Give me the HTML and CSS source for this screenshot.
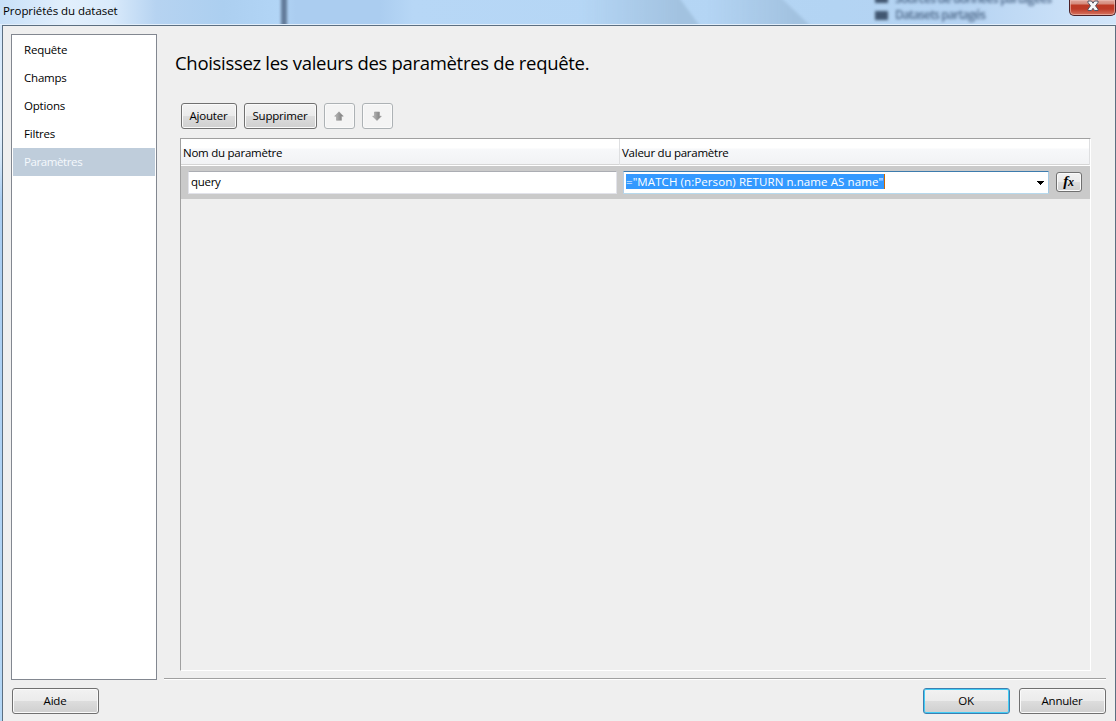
FILE: index.html
```html
<!DOCTYPE html>
<html lang="fr">
<head>
<meta charset="utf-8">
<title>Propriétés du dataset</title>
<link rel="stylesheet" href="styles.css">
</head>
<body>
<div class="window">
  <header class="titlebar">
    <svg class="glass" width="1116" height="24" viewBox="0 0 1116 24" aria-hidden="true">
      <defs>
        <linearGradient id="sky"><stop offset="0" stop-color="#c8e0f8"/><stop offset=".06" stop-color="#e2effc"/><stop offset=".1" stop-color="#d9eafb"/><stop offset=".14" stop-color="#b6d3f1"/><stop offset=".2" stop-color="#accff0"/><stop offset=".25" stop-color="#b2d5f6"/><stop offset=".265" stop-color="#abcdf0"/><stop offset=".34" stop-color="#abcdf0"/><stop offset=".37" stop-color="#b7d7f6"/><stop offset=".54" stop-color="#b5d6f5"/><stop offset=".75" stop-color="#b3d4f3"/><stop offset=".86" stop-color="#b5d3f2"/><stop offset="1" stop-color="#d3e6fa"/></linearGradient>
        <linearGradient id="fold"><stop offset="0" stop-color="#a2c2e0" stop-opacity="0"/><stop offset=".8" stop-color="#a2c2e0"/></linearGradient>
        <filter id="soft" x="-20%" y="-50%" width="140%" height="200%"><feGaussianBlur stdDeviation="1.8"/></filter>
      </defs>
      <rect width="1116" height="24" fill="url(#sky)"/>
      <path d="M580-8H675L705 33H580Z" fill="url(#fold)" filter="url(#soft)"/>
      <path d="M705-8H775L818 33H705Z" fill="url(#fold)" filter="url(#soft)"/>
      <g filter="url(#soft)">
        <path d="M281-5H287V30H281Z" fill="#627a99"/>
        <path d="M875-3H888V3H875ZM875 11H888V20H875Z" fill="#405670"/>
        <g class="behind">
          <text x="895" y="3" textLength="157">Sources de données partagées</text>
          <text x="895" y="19" textLength="91">Datasets partagés</text>
        </g>
      </g>
    </svg>
    <h1 class="caption">Propriétés du dataset</h1>
    <button class="close" aria-label="Fermer">
      <svg width="12" height="12" viewBox="0 0 12 12"><path d="M1 1H4.5L6 3.2 7.5 1H11V2.5L8.5 5.8 11 9.2V10.5H7.5L6 8.3 4.5 10.5H1V9.2L3.5 5.8 1 2.5Z" fill="#f7f7f8" stroke="#535666"/></svg>
    </button>
  </header>
  <div class="client">
    <div class="content">
      <nav class="nav">
        <a class="nav-item">Requête</a>
        <a class="nav-item">Champs</a>
        <a class="nav-item">Options</a>
        <a class="nav-item">Filtres</a>
        <a class="nav-item selected">Paramètres</a>
      </nav>
      <main class="page">
        <h2 class="heading">Choisissez les valeurs des paramètres de requête.</h2>
        <div class="toolbar">
          <button class="btn add">Ajouter</button>
          <button class="btn remove">Supprimer</button>
          <button class="btn arrow" disabled aria-label="Monter">
            <svg width="10" height="10" viewBox="0 0 10 10"><defs><linearGradient id="gray"><stop stop-color="#bbb"/><stop offset="1" stop-color="#777"/></linearGradient></defs><path d="M5 .8 9.3 5.2H7.5V9.3H2.5V5.2H.7Z" fill="url(#gray)" stroke="#999" stroke-width=".6"/></svg>
          </button>
          <button class="btn arrow" disabled aria-label="Descendre">
            <svg width="10" height="10" viewBox="0 0 10 10"><path d="M5 9.5 9.3 5.2H7.5V1H2.5V5.2H.7Z" fill="url(#gray)" stroke="#999" stroke-width=".6"/></svg>
          </button>
        </div>
        <section class="grid">
          <div class="grid-head">
            <div class="col name-col">Nom du paramètre</div>
            <div class="col value-col">Valeur du paramètre</div>
          </div>
          <div class="grid-row">
            <div class="field">query</div>
            <div class="combo">
              <span class="selection">="MATCH (n:Person) RETURN n.name AS name"</span>
              <svg class="drop" width="8" height="4" viewBox="0 0 8 4" shape-rendering="crispEdges"><path d="M0 0H8L4 4Z"/></svg>
            </div>
            <button class="btn fx" aria-label="Expression"><span class="f">f</span><span class="x">x</span></button>
          </div>
        </section>
      </main>
    </div>
    <footer class="footer">
      <button class="btn dialog-btn help">Aide</button>
      <button class="btn dialog-btn ok">OK</button>
      <button class="btn dialog-btn">Annuler</button>
    </footer>
  </div>
</div>
</body>
</html>
```
FILE: styles.css
```css
* { box-sizing: border-box; }
body { margin: 0; overflow: hidden; font: 11.5px/16px "Open Sans", "Noto Sans", sans-serif; letter-spacing: -0.2px; color: #000; }
h1, h2 { margin: 0; font-weight: 400; }
button { font: inherit; letter-spacing: inherit; color: inherit; }

.window { width: 1116px; height: 721px; display: flex; flex-direction: column; background: linear-gradient(#cfe5fb 0, #e3f0fc 130px, #d2e5f7 160px, #a9cdf2 200px, #b4d7f6 100%); }
.titlebar { position: relative; display: flex; justify-content: space-between; height: 25px; border-bottom: 1px solid #e3effb; }
.glass { position: absolute; top: 0; left: 0; }
.behind { font-size: 12px; font-weight: 600; fill: #4f6a8b; }
.caption { position: relative; padding: 3px 0 0 3px; font-size: 11.5px; letter-spacing: -0.05px; }
.close { position: relative; width: 47px; height: 16px; padding: 0; display: flex; justify-content: center; border: 1px solid #4b2026; border-top: 0; border-radius: 0 0 5px 5px; background: linear-gradient(#e0a79d 0, #d5897b 4px, #bd3a25 5px, #bd3b28 9px, #d77561 15px); box-shadow: inset 0 0 0 1px #ecc0b7a0; }

.client { flex: 1; margin-left: 2px; display: flex; flex-direction: column; border: solid #5c6f81; border-width: 1px 1px 0; background: #efefef; }
.content { display: flex; height: 654px; padding: 8px 9px 0 8px; }
.nav { width: 146px; height: 646px; padding: 1px; border: 1px solid #828790; background: #fff; }
.nav-item { display: block; height: 28px; padding: 6px 0 0 11px; }
.selected { background: #bfcddb; color: #f5f9fd; letter-spacing: -0.4px; }

.page { width: 942px; margin-left: 7px; padding: 16px 15px 0 11px; border-bottom: 1px solid #fff; box-shadow: inset 0 -1px #a0a0a0; height: 646px; }
.heading { font-size: 18.5px; line-height: 26px; white-space: nowrap; letter-spacing: -0.31px; }
.toolbar { display: flex; gap: 7px; margin: 27px 0 0 6px; }
.btn { height: 26px; padding: 0 1px 0 0; text-align: center; border: 1px solid #707070; border-radius: 3px; background: linear-gradient(#f2f2f2 0, #ebebeb 49%, #dddddd 50%, #cfcfcf 100%); box-shadow: inset 0 0 0 1px #fafafa; }
.add { width: 56px; }
.remove { width: 73px; }
.arrow { width: 31px; display: flex; align-items: center; justify-content: center; border-color: #adb2b5; background: #f4f4f4; }

.grid { width: 911px; height: 533px; margin: 9px 0 0 5px; border: 1px solid; border-color: #a0a0a0 #fff #fff #a0a0a0; }
.grid-head { display: flex; height: 27px; border-bottom: 1px solid #fff; box-shadow: inset 0 -1px #d5d5d5; background: linear-gradient(#fff 0, #fff 9px, #f7f8fa 10px, #f1f2f4 26px); letter-spacing: -0.25px; }
.col { padding: 6px 0 0 2px; border-right: 1px solid #dedfe1; }
.name-col { width: 439px; }
.value-col { width: 470px; }
.grid-row { display: flex; height: 33px; padding: 5px 0 0 7px; background: #cacaca; }
.field, .combo { height: 23px; border: 1px solid #e2e3ea; border-top-color: #abadb3; border-radius: 1px; background: #fff; }
.field { width: 429px; padding: 2px 0 0 2px; letter-spacing: -0.3px; }
.combo { width: 426px; margin-left: 6px; padding: 2px 4px 0 2px; display: flex; justify-content: space-between; border-color: #3d7bad #a4c9e3 #b7d9ed #b5cfe7; }
.selection { width: 259px; height: 15px; line-height: 15px; white-space: nowrap; letter-spacing: 0.09px; background: #3399ff; color: #fff; border-right: 1px solid #cc6600; }
.drop { margin-top: 7px; }
.fx { width: 26px; height: 20px; margin: 1px 0 0 7px; font: italic bold 15px/15px "Liberation Serif", serif; }
.x { font-size: 12px; }

.footer { display: flex; gap: 9px; padding: 8px 9px 0; }
.dialog-btn { width: 87px; }
.help { margin-right: auto; }
.ok { border-color: #3c7fb1; box-shadow: inset 0 0 0 1px #43cdf5; }
```
